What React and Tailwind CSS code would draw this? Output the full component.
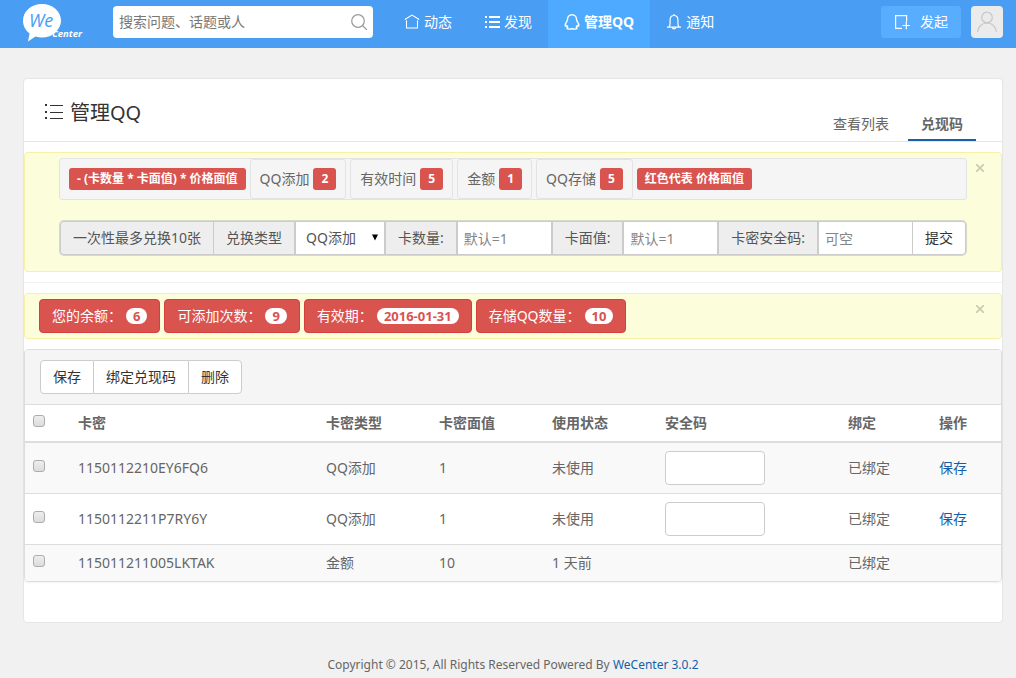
import React, { useState } from 'react';

const NAV_ITEMS = [
  { id: 'home', label: '动态', icon: HomeIcon },
  { id: 'explore', label: '发现', icon: ListIcon },
  { id: 'qq', label: '管理QQ', icon: QQIcon, active: true },
  { id: 'notice', label: '通知', icon: BellIcon },
];

const PRICES = [
  { label: 'QQ添加', price: 2 },
  { label: '有效时间', price: 5 },
  { label: '金额', price: 1 },
  { label: 'QQ存储', price: 5 },
];

const STATS = [
  { label: '您的余额：', value: '6' },
  { label: '可添加次数：', value: '9' },
  { label: '有效期：', value: '2016-01-31' },
  { label: '存储QQ数量：', value: '10' },
];

const CARDS = [
  { code: '1150112210EY6FQ6', type: 'QQ添加', amount: 1, status: '未使用', editable: true },
  { code: '1150112211P7RY6Y', type: 'QQ添加', amount: 1, status: '未使用', editable: true },
  { code: '115011211005LKTAK', type: '金额', amount: 10, status: '1 天前', editable: false },
];

function HomeIcon() {
  return (
    <svg className="h-4 w-4" viewBox="0 0 16 16" fill="none" stroke="currentColor" strokeWidth="1.1">
      <path d="M0.8 5.500 8 1.100 15.200 5.500M2.500 6.300v7.700h11V6.300" />
    </svg>
  );
}

function ListIcon() {
  return (
    <svg className="h-4 w-4" viewBox="0 0 16 16" fill="currentColor">
      <path d="M1 2h2v2H1zM1 7h2v2H1zM1 12h2v2H1zM5 2h11v2H5zM5 7h11v2H5zM5 12h11v2H5z" />
    </svg>
  );
}

function QQIcon() {
  return (
    <svg className="h-4 w-4" viewBox="0 0 16 16" fill="none" stroke="currentColor" strokeWidth="1.4" strokeLinejoin="round">
      <path d="M8 .8C5 .8 3.500 2.800 3.500 5.300c0 1-.3 1.500-.8 2.300C1.600 9.200.9 10.500 1.200 11.700c.2.700.9.500 1.600-.2.200.7.500 1.200 1 1.700-.6.300-.9.700-.8 1.200.4.900 3.700.9 5 .2 1.300.7 4.600.7 5-.2.100-.5-.2-.9-.8-1.200.5-.5.800-1 1-1.700.7.700 1.400.9 1.600.2.300-1.200-.4-2.500-1.500-4.100-.5-.8-.8-1.300-.8-2.300C12.500 2.800 11 .8 8 .8z" />
    </svg>
  );
}

function BellIcon() {
  return (
    <svg className="h-4 w-4" viewBox="0 0 16 16" fill="none" stroke="currentColor" strokeWidth="1.2">
      <path d="M1 13.200h14M2.800 13.200c1-1 1.300-2 1.300-4V6C4.100 3.300 5.600 1.500 8 1.500S11.900 3.300 11.900 6v3.200c0 2 .3 3 1.300 4M8 0v1.500M6.300 13.400c.2 1.900 3.200 1.900 3.400 0" />
    </svg>
  );
}

function Logo() {
  return (
    <svg className="h-10 w-16" viewBox="0 -2 64 40">
      <path
        fill="#fff"
        d="M19 0C8.500 0 0 7.400 0 16.500c0 5.500 2.700 10 6.600 13L5 37.500l7.500-5c2 .6 4.300.9 6.500.9 5 0 9-1 11-3.400 4.600-3 8-7.800 8-13.500C38 7.400 29.500 0 19 0z"
      />
      <text x="6" y="23" fill="#499ef3" fontSize="18" fontStyle="italic" fontFamily="'Open Sans', sans-serif">
        We
      </text>
      <text x="29" y="33" fill="#fff" fontSize="9.500" fontWeight="700" fontStyle="italic" fontFamily="'Open Sans', sans-serif">
        Center
      </text>
    </svg>
  );
}

function CloseButton() {
  return (
    <button type="button" aria-label="关闭" className="absolute top-[9px] right-[15px] p-0.5 text-[#c9caae]">
      <svg className="h-2 w-2" viewBox="0 0 8 8" stroke="currentColor" strokeWidth="1.6">
        <path d="M0 0l8 8M8 0L0 8" />
      </svg>
    </button>
  );
}

function Alert({ className, children }) {
  return (
    <div className={`relative rounded border border-[#f8f0a4] bg-[#fcfdda] ${className}`}>
      {children}
      <CloseButton />
    </div>
  );
}

function PriceLabel({ children }) {
  return (
    <span className="inline-flex h-[22px] items-center rounded-[3px] bg-[#d9534f] px-2 text-xs font-bold whitespace-nowrap text-white">
      {children}
    </span>
  );
}

function Addon({ htmlFor, children }) {
  return (
    <label
      htmlFor={htmlFor}
      className="flex shrink-0 items-center border border-[#ccc] bg-[#eee] px-3 whitespace-nowrap text-[#555]"
    >
      {children}
    </label>
  );
}

function TextField({ id, placeholder }) {
  return (
    <input
      id={id}
      type="text"
      placeholder={placeholder}
      className="h-full w-0 min-w-0 flex-1 border border-[#ccc] bg-white px-1.5 placeholder-[#858585] outline-none"
    />
  );
}

function Checkbox({ label, checked, onChange }) {
  return (
    <input
      type="checkbox"
      aria-label={label}
      checked={checked}
      onChange={onChange}
      className="mb-1 block h-3 w-3 appearance-none rounded-[3px] border border-[#adadad] bg-linear-to-b from-[#eee] to-[#dcdcdc] checked:from-[#499ef3] checked:to-[#499ef3]"
    />
  );
}

function Header() {
  return (
    <header className="flex h-12 items-center bg-[#499ef3] pr-[13px] pl-[23px] text-white">
      <a href="#" aria-label="WeCenter" className="mb-1 shrink-0">
        <Logo />
      </a>
      <form className="mb-1 ml-[26px] flex h-8 w-[260px] items-center rounded bg-white px-1.5">
        <input
          type="text"
          aria-label="搜索"
          placeholder="搜索问题、话题或人"
          className="min-w-0 flex-1 text-[#666] placeholder-[#777] outline-none"
        />
        <button type="submit" aria-label="搜索" className="text-[#999]">
          <svg className="h-4 w-4" viewBox="0 0 16 16" fill="none" stroke="currentColor" strokeWidth="1.2">
            <circle cx="7" cy="7" r="6.300" />
            <path d="M11.500 11.500 16 16" />
          </svg>
        </button>
      </form>
      <nav className="ml-[15px] flex h-full">
        {NAV_ITEMS.map(({ id, label, icon: Icon, active }) => (
          <a
            key={id}
            href={`#${id}`}
            className={`flex items-center gap-1 px-4 pb-1 whitespace-nowrap ${active ? 'bg-[#4eaaff] font-bold' : ''}`}
          >
            <Icon />
            {label}
          </a>
        ))}
      </nav>
      <div className="mb-1 ml-auto flex gap-2.5">
        <button type="button" className="flex h-8 w-20 items-center justify-center gap-2.5 rounded-[3px] bg-[#59adff]">
          <svg className="h-4 w-4" viewBox="0 0 16 16" fill="none" stroke="currentColor" strokeWidth="1.2">
            <path d="M8 14.400H1.600V1.600h11v6M8.500 11.500H16M12.300 7.800v7.400" />
          </svg>
          发起
        </button>
        <a href="#me" aria-label="个人中心" className="flex h-8 w-8 justify-center rounded bg-[#ebebeb] text-[#c6c6c6]">
          <svg className="h-8 w-8" viewBox="0 0 32 32" fill="none" stroke="currentColor" strokeWidth="1.200">
            <circle cx="16" cy="11.500" r="5.300" />
            <path d="M6.600 26c.4-5.500 4.400-9 9.400-9s9 3.500 9.400 9" />
          </svg>
        </a>
      </div>
    </header>
  );
}

function ExchangeForm() {
  return (
    <form className="mx-px mt-[21px] flex h-[34px] rounded ring-1 ring-[#d8d8cc]" onSubmit={(e) => e.preventDefault()}>
      <div className="flex shrink-0 items-center rounded-l border border-r-0 border-[#ccc] bg-[#eee] px-3 whitespace-nowrap text-[#555]">
        一次性最多兑换10张
      </div>
      <Addon htmlFor="type">兑换类型</Addon>
      <div className="relative w-[90px] shrink-0">
        <select id="type" className="h-full w-full appearance-none border border-[#ccc] bg-white pl-2.5 text-[#555] outline-none">
          <option>QQ添加</option>
          <option>有效时间</option>
          <option>金额</option>
          <option>QQ存储</option>
        </select>
        <svg className="pointer-events-none absolute top-3 right-1.5 h-2 w-2 fill-black" viewBox="0 0 8 8">
          <path d="M1 1.500h6L4 7.500z" />
        </svg>
      </div>
      <Addon htmlFor="count">卡数量:</Addon>
      <TextField id="count" placeholder="默认=1" />
      <Addon htmlFor="amount">卡面值:</Addon>
      <TextField id="amount" placeholder="默认=1" />
      <Addon htmlFor="secret">卡密安全码:</Addon>
      <TextField id="secret" placeholder="可空" />
      <button type="submit" className="shrink-0 rounded-r border border-l-0 border-[#ccc] bg-white px-3 text-[#333]">
        提交
      </button>
    </form>
  );
}

function CardTable() {
  const [selected, setSelected] = useState([]);

  const toggle = (code) => {
    setSelected(selected.includes(code) ? selected.filter((c) => c !== code) : [...selected, code]);
  };

  const toggleAll = () => {
    setSelected(selected.length === CARDS.length ? [] : CARDS.map((c) => c.code));
  };

  return (
    <div className="mt-2.5 overflow-hidden rounded border border-[#ddd] shadow-xs">
      <div className="flex bg-[#f5f5f5] px-[15px] py-2.5 text-[#333]">
        <button type="button" className="h-[34px] rounded-l border border-[#ccc] bg-white px-3">保存</button>
        <button type="button" className="h-[34px] border-y border-[#ccc] bg-white px-3">绑定兑现码</button>
        <button type="button" className="h-[34px] rounded-r border border-[#ccc] bg-white px-3">删除</button>
      </div>
      <table className="w-full table-fixed border-t border-[#ddd] text-left leading-5">
        <thead>
          <tr className="border-b-2 border-[#ddd]">
            <th className="w-[45px] p-2">
              <Checkbox label="全选" checked={selected.length === CARDS.length} onChange={toggleAll} />
            </th>
            <th className="p-2">卡密</th>
            <th className="w-[113px] p-2">卡密类型</th>
            <th className="w-[113px] p-2">卡密面值</th>
            <th className="w-[113px] p-2">使用状态</th>
            <th className="w-[183px] p-2">安全码</th>
            <th className="w-[91px] p-2">绑定</th>
            <th className="w-[70px] p-2">操作</th>
          </tr>
        </thead>
        <tbody>
          {CARDS.map((card) => (
            <tr key={card.code} className="border-b border-[#ddd] last:border-b-0 odd:bg-[#f9f9f9]">
              <td className="p-2">
                <Checkbox label={card.code} checked={selected.includes(card.code)} onChange={() => toggle(card.code)} />
              </td>
              <td className="p-2">{card.code}</td>
              <td className="p-2">{card.type}</td>
              <td className="p-2">{card.amount}</td>
              <td className="p-2">{card.status}</td>
              <td className="p-2">
                {card.editable && (
                  <input
                    type="text"
                    aria-label="安全码"
                    className="block h-[34px] w-[100px] rounded border border-[#ccc] bg-white px-2 outline-none"
                  />
                )}
              </td>
              <td className="p-2">已绑定</td>
              <td className="p-2">
                {card.editable && <a href="#save" className="text-[#145faa]">保存</a>}
              </td>
            </tr>
          ))}
        </tbody>
      </table>
    </div>
  );
}

export default function App() {
  return (
    <div className="min-h-screen bg-[#f1f1f1] font-['Noto_Sans','Noto_Sans_CJK_SC',sans-serif] text-sm text-[#666]">
      <Header />

      <main className="mt-[30px] mr-[13px] ml-[23px] rounded border border-[#e6e6e6] bg-white pb-10">
        <div className="flex h-[63px] items-end justify-between border-b border-[#e6e6e6] pr-[26px] pl-5">
          <h1 className="mb-3.5 flex items-center gap-1.5 text-xl text-[#333]">
            <svg className="h-5 w-5" viewBox="0 0 20 20" fill="currentColor">
              <path d="M1 1h2v2H1zM1 8h2v2H1zM1 14h2v2H1zM6 2h13v1H6zM6 9h13v1H6zM6 15h13v1H6z" />
            </svg>
            管理QQ
          </h1>
          <div className="flex">
            <a href="#list" className="px-[19px] pb-[7px]">查看列表</a>
            <a href="#code" className="border-b-2 border-[#1860ab] px-[13px] pb-[5px] font-bold">兑现码</a>
          </div>
        </div>

        <Alert className="mt-2.5 px-[34px] pt-[5px] pb-4">
          <div className="flex h-[42px] items-center gap-1 rounded-[3px] border border-[#e3e3e3] bg-[#f5f5f5] px-[9px]">
            <PriceLabel>- (卡数量 * 卡面值) * 价格面值</PriceLabel>
            {PRICES.map((item) => (
              <div key={item.label} className="flex h-10 items-center gap-1 rounded-[3px] border border-[#e3e3e3] px-[9px] whitespace-nowrap">
                {item.label}
                <PriceLabel>{item.price}</PriceLabel>
              </div>
            ))}
            <PriceLabel>红色代表 价格面值</PriceLabel>
          </div>
          <ExchangeForm />
        </Alert>

        <hr className="my-2.5 border-[#f2f2f2]" />

        <Alert className="flex gap-1 px-3.5 py-[5px]">
          {STATS.map((item) => (
            <button
              key={item.label}
              type="button"
              className="flex h-[34px] items-center gap-1 rounded border border-[#d43f3a] bg-[#d9534f] px-3 whitespace-nowrap text-white"
            >
              {item.label}
              <span className="rounded-full bg-white px-[7px] text-[13px] leading-4 font-bold text-[#d9534f]">{item.value}</span>
            </button>
          ))}
        </Alert>

        <CardTable />
      </main>

      <footer className="mt-8 pl-2.5 text-center text-xs leading-5">
        Copyright © 2015, All Rights Reserved Powered By{' '}
        <a href="#wecenter" className="text-[#145faa]">WeCenter 3.0.2</a>
      </footer>
    </div>
  );
}
